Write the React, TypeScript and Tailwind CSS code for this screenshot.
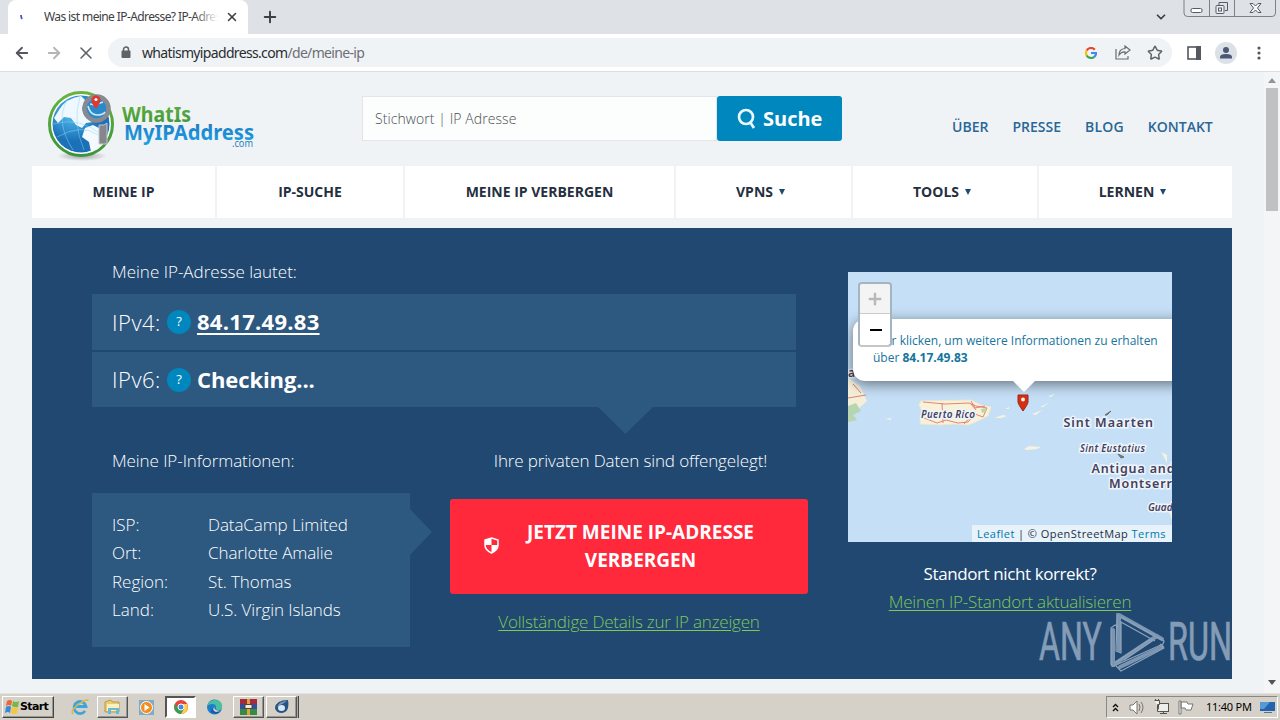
import type { ReactNode } from "react";
import {
  ArrowLeft,
  ArrowRight,
  ChevronDown,
  Plus,
  Star,
  X,
} from "lucide-react";

const navItems = [
  { label: "MEINE IP", width: "w-[183px]" },
  { label: "IP-SUCHE", width: "w-[186px]" },
  { label: "MEINE IP VERBERGEN", width: "w-[269px]" },
  { label: "VPNS", width: "w-[175px]", menu: true },
  { label: "TOOLS", width: "w-[184px]", menu: true },
  { label: "LERNEN", width: "w-[193px]", menu: true },
];

const details = [
  ["ISP:", "DataCamp Limited"],
  ["Ort:", "Charlotte Amalie"],
  ["Region:", "St. Thomas"],
  ["Land:", "U.S. Virgin Islands"],
];

function WindowButtons() {
  return (
    <svg className="absolute right-[3px] top-0" width="94" height="18" fill="none">
      <path d="M1 0V13Q1 16.500 4.500 16.500H89Q92.500 16.500 92.500 13V0M26.500 0V16M51.500 0V16" stroke="#7b808a" />
      <g stroke="#555b66">
        <rect x="8" y="8.500" width="11" height="4" rx="1.500" fill="#fff" />
        <path d="M36 5V2.500H44.500V10.500H42" />
        <rect x="33" y="5.500" width="8" height="8" rx="1" fill="#eef0f3" />
        <rect x="35.500" y="8" width="3" height="3" />
        <path d="M67 3.500h3l2.500 2.500L75 3.500h3L74.500 8l3.500 4.500h-3L72.500 10 70 12.500h-3L70.500 8z" fill="#f7f8fa" />
      </g>
    </svg>
  );
}

function TabStrip() {
  return (
    <div className="relative flex h-[34px] shrink-0 bg-[#dee1e6] pl-2">
      <div className="flex h-full w-60 items-center rounded-t-lg bg-white pl-[12px] pr-[9px]">
        <svg className="shrink-0" width="6" height="10" fill="none">
          <path d="M1 3Q1 5 2 7" stroke="#4459c9" strokeWidth="1.800" />
        </svg>
        <div className="relative ml-[18px] w-[174px] shrink-0 overflow-hidden whitespace-nowrap text-[12px] tracking-[-0.6px] text-[#3c4043]">
          Was ist meine IP-Adresse? IP-Adress
          <div className="absolute inset-y-0 right-0 w-6 bg-gradient-to-r from-transparent to-white" />
        </div>
        <X className="ml-[7px] size-[14px] shrink-0 text-[#3c4043]" strokeWidth={2.6} />
      </div>
      <Plus className="ml-[13px] mt-2 size-[18px] text-[#3c4043]" strokeWidth={2.6} />
      <ChevronDown className="absolute right-[112px] top-[10px] size-[14px] text-[#3c4043]" strokeWidth={3} />
      <WindowButtons />
    </div>
  );
}

function GoogleMark() {
  return (
    <svg width="12" height="12" viewBox="0 0 12 12" fill="none" strokeWidth="2.200">
      <path d="M9.800 2.700A5 5 0 0 0 1.700 3.500" stroke="#ea4335" />
      <path d="M1.700 3.500A5 5 0 0 0 1.700 8.500" stroke="#fbbc05" />
      <path d="M1.700 8.500A5 5 0 0 0 9.300 9.800" stroke="#34a853" />
      <path d="M6 6H11Q11 8.600 9.300 9.800" stroke="#4285f4" />
    </svg>
  );
}

function Toolbar() {
  return (
    <div className="flex h-[38px] shrink-0 items-center border-b border-[#dcdfe2] bg-white pl-[13px] pr-3">
      <ArrowLeft className="size-[18px] text-[#55585d]" strokeWidth={2.4} />
      <ArrowRight className="ml-[14px] size-[18px] text-[#b3b5b8]" strokeWidth={2.4} />
      <X className="ml-[13px] size-[20px] text-[#5f6368]" strokeWidth={1.9} />
      <div className="ml-[12px] flex h-[29px] w-[1064px] items-center rounded-full bg-[#f0f3f5] pl-[13px] pr-[9px]">
        <svg width="10" height="13" fill="none">
          <path d="M2.500 6V3.500a2.500 2.500 0 0 1 5 0V6" stroke="#5f6368" strokeWidth="1.500" />
          <rect x="0.500" y="4.500" width="9" height="7.500" rx="1" fill="#5f6368" />
        </svg>
        <span className="ml-[11px] text-[14px] tracking-[-0.66px] text-[#2a2c2f]">
          whatismyipaddress.com<span className="text-[#6b6f75]">/de/meine-ip</span>
        </span>
        <div className="ml-auto flex items-center">
          <GoogleMark />
          <svg className="ml-[18px]" width="17" height="15" fill="none" stroke="#686c72" strokeWidth="1.200">
            <path d="M1 4v10h12v-3" />
            <path d="M10 1l5 4-5 4V6.800Q6 6.500 4 10 4 4 10 3.500z" />
          </svg>
          <Star className="ml-[15px] size-[16px] text-[#5f6368]" strokeWidth={2.2} />
        </div>
      </div>
      <svg className="ml-[15px]" width="14" height="14">
        <rect x="1" y="1" width="12" height="12" fill="white" stroke="#55585e" strokeWidth="1.600" />
        <path d="M9 0h5v14H9z" fill="#55585e" />
      </svg>
      <svg className="ml-[14px]" width="22" height="22">
        <circle cx="11" cy="11" r="11" fill="#dce1e8" />
        <circle cx="11" cy="8" r="3" fill="#4b5876" />
        <path d="M5 16.500V15q0-3 6-3t6 3v1.500z" fill="#4b5876" />
      </svg>
      <svg className="ml-[20px]" width="4" height="14" fill="#55585e">
        <circle cx="2" cy="2" r="1.600" />
        <circle cx="2" cy="7" r="1.600" />
        <circle cx="2" cy="12" r="1.600" />
      </svg>
    </div>
  );
}

function Logo() {
  return (
    <svg width="214" height="76" viewBox="0 0 214 76">
      <defs>
        <radialGradient id="globe" cx="35%" cy="30%">
          <stop offset="0" stopColor="#55c4f4" />
          <stop offset="1" stopColor="#1c70b8" />
        </radialGradient>
        <radialGradient id="shade">
          <stop offset="0" stopColor="#8b8e91" stopOpacity="0.8" />
          <stop offset="1" stopColor="#8b8e91" stopOpacity="0" />
        </radialGradient>
        <linearGradient id="green" x1="0" y1="0" x2="0" y2="1">
          <stop offset="0" stopColor="#69b43f" />
          <stop offset="1" stopColor="#3a9439" />
        </linearGradient>
        <linearGradient id="blue" x1="0" y1="0" x2="0" y2="1">
          <stop offset="0" stopColor="#1c6fbc" />
          <stop offset="1" stopColor="#1da4e5" />
        </linearGradient>
      </defs>
      <ellipse cx="34" cy="66" rx="25" ry="5" fill="url(#shade)" />
      <circle cx="33" cy="34" r="31.500" fill="#fff" stroke="url(#green)" strokeWidth="3" />
      <circle cx="33" cy="34" r="28.500" fill="url(#globe)" />
      <path d="M11 20Q18 8 33 6l4 4-3 9 2 5 7 3 2 5-7 1-4 5-6-3-5-7-7-1-6 6-4-5z" fill="#eef8fe" />
      <path d="M37 38l8-3 8 4 6 1q0 11-9 19l-7 3-2-10-7-5z" fill="#f3f9fd" />
      <path d="M5 34q28-8 50 12M9 47q25-14 41-2M19 10Q7 32 25 60M32 7q-8 25 4 53" fill="none" stroke="#8cd4f5" strokeWidth="0.700" opacity="0.700" />
      <circle cx="48.500" cy="18.500" r="12" fill="#298acb" stroke="#888a90" strokeWidth="4.500" />
      <path d="M40 16q2 9 9 9 6 0 8-3M42 14l5 1 8-3" fill="none" stroke="#cbe9f8" strokeWidth="1.600" />
      <path d="M48 19q-5-6-4.500-9a4.500 4.500 0 0 1 9 0q0 3-4.500 9z" fill="#db3a34" />
      <circle cx="48" cy="9.500" r="1.500" fill="#fff" />
      <path d="M51 35q6 1 8-2v21h-8z" fill="#85878d" stroke="#c5c8cb" />
      <g fontFamily="Noto Sans, sans-serif" fontWeight="700">
        <text x="74" y="32" fontSize="21.500" fill="url(#green)" textLength="69" lengthAdjust="spacingAndGlyphs">WhatIs</text>
        <text x="76" y="49.500" fontSize="21.500" fill="url(#blue)" textLength="130" lengthAdjust="spacingAndGlyphs">MyIPAddress</text>
      </g>
      <text x="184" y="57" fontSize="10" fontFamily="Noto Sans, sans-serif" fill="#267fba" textLength="21" lengthAdjust="spacingAndGlyphs">.com</text>
    </svg>
  );
}

function SiteHeader() {
  return (
    <header className="flex h-[94px] shrink-0 pl-12">
      <div className="w-[314px] pt-[18px]">
        <Logo />
      </div>
      <div className="mt-6 flex h-[45px] w-[480px]">
        <div className="flex w-[355px] items-center border border-[#e3e6e8] bg-[#fcfdfd] pl-3 text-[14px] font-light tracking-[0.08px] text-[#4b4e51]">
          Stichwort | IP Adresse
        </div>
        <div className="flex w-[125px] items-center rounded-[3px] bg-[#0087be] pl-5 text-[20px] font-bold text-white">
          <svg width="20" height="22" fill="none" stroke="#e8f8ff" strokeWidth="2.700">
            <circle cx="9" cy="9" r="7" />
            <path d="M13 14l4 6" />
          </svg>
          <span className="ml-[6px]">Suche</span>
        </div>
      </div>
      <div className="ml-[110px] mt-[45px] flex gap-6 text-[14px] font-semibold leading-5 text-[#2a6697]">
        <span>ÜBER</span>
        <span>PRESSE</span>
        <span className="tracking-[0.2px]">BLOG</span>
        <span>KONTAKT</span>
      </div>
    </header>
  );
}

function MainNav() {
  return (
    <nav className="mx-8 flex h-[52px] shrink-0 gap-[2px]">
      {navItems.map((item) => (
        <div
          key={item.label}
          className={`${item.width} flex shrink-0 items-center justify-center bg-white pb-[2px] text-[14px] font-bold text-[#252f3f]`}
        >
          {item.label}
          {item.menu && (
            <svg className="ml-[6px] mr-[6px] mt-[1px]" width="6" height="6">
              <path d="M0 0h6L3 6z" fill="#1f4872" />
            </svg>
          )}
        </div>
      ))}
    </nav>
  );
}

function AddressRow({ label, children }: { label: string; children: ReactNode }) {
  return (
    <div className="flex items-center bg-[#2d587f] pl-5 text-[22px] text-white">
      <span className="w-[55px] font-light tracking-[0.5px]">{label}</span>
      <span className="flex size-6 items-center justify-center rounded-full bg-[#0087be] text-[13px] font-normal">
        ?
      </span>
      <span className="ml-[6px] font-bold">{children}</span>
    </div>
  );
}

function LocationMap() {
  return (
    <div className="relative h-[270px] w-[324px] overflow-hidden bg-[#c5dff6] text-left">
      <svg className="absolute inset-0" width="324" height="270">
        <path d="M0 106l12 8 7 15-10 9-9 6z" fill="#f5efda" />
        <path d="M0 134l8-3 5 8-8 4 4 5-9 2z" fill="#b7d5ae" />
        <path d="M0 126l18-3M5 112l8 9" fill="none" stroke="#dd8176" />
        <path d="M73 129l50-1 10 5 10 2-3 9-12 6-8 3-14-1-14 1-20-1 2-13-3-6z" fill="#f8f2d9" stroke="#eee8cd" />
        <path d="M75 130l22 2 24-1 7 3 11 2-4 9-8-3-7 8-10 1-12-3-9 3-13-5M94 131l1 20M123 129l4 7 10-2M123 132l5 6M116 152l10-11" fill="none" stroke="#e07870" strokeWidth="0.900" />
        <path d="M133 137l5-1 1 3-5 2z" fill="#bed69f" />
        <path d="M146 146l9-3 4 1-6 2zM157 137l4-2v2zM176 177l5-3 12 1-4 2-10 1zM184 142l10-4-6 5zM192 135l10-5-7 5zM200 124l7-2-4 3zM37 147l6-1v2z" fill="#f5f3df" />
        <path d="M313 180l6 3v8l-3-6zM324 230l-4 7 4 11z" fill="#f5f3df" />
        <path d="M257 143l6-4-4 4zM270 182l6 3-3 1z" fill="#7c8580" stroke="#647069" />
        <g fill="#45405b" stroke="#edf5fc" strokeWidth="3" paintOrder="stroke" fontFamily="Noto Sans, sans-serif" fontWeight="600">
          <text x="0" y="105" fontSize="12">a</text>
          <text x="73" y="146" fontSize="10" fontStyle="italic" textLength="54">Puerto Rico</text>
          <text x="215.500" y="154.500" fontSize="12.500" textLength="89.500">Sint Maarten</text>
          <text x="232" y="180" fontSize="10" fontStyle="italic" textLength="65">Sint Eustatius</text>
          <text x="243.500" y="201" fontSize="12.500" textLength="83">Antigua and</text>
          <text x="261" y="216" fontSize="12.500" letterSpacing="0.9">Montserr</text>
          <text x="300" y="239" fontSize="10" fontStyle="italic">Guad</text>
        </g>
      </svg>
      <div className="absolute left-[5px] top-[47px] h-[62px] w-[340px] rounded-xl bg-white pl-5 pt-[13px] text-[12px] leading-[17px] text-[#16749d] shadow-[0_3px_14px_rgba(0,0,0,0.5)]">
        <div className="whitespace-nowrap">Hier klicken, um weitere Informationen zu erhalten</div>
        <div>über <b>84.17.49.83</b></div>
      </div>
      <svg className="absolute left-[164px] top-[108px]" width="24" height="34">
        <path d="M0 0h24L12 12z" fill="#fff" />
        <path d="M6 15h10v7q0 2-5 9-5-7-5-9z" fill="#d42f16" stroke="#9d2718" />
        <circle cx="11" cy="19.500" r="2" fill="#fff5df" />
      </svg>
      <div className="absolute left-[10px] top-[10px] w-[34px] overflow-hidden rounded-[4px] border-2 border-[#a5b4c1] border-b-[#c3c5c8]">
        <div className="flex h-[30px] items-center justify-center border-b border-[#ccc] bg-[#f4f4f4]">
          <Plus className="size-[18px] text-[#b9b9b9]" strokeWidth={3.3} />
        </div>
        <div className="flex h-[31px] items-center justify-center bg-white">
          <span className="ml-[2px] h-[2px] w-3 bg-black" />
        </div>
      </div>
      <div className="absolute bottom-0 right-0 h-[17px] w-[200px] whitespace-nowrap bg-[#e7f2fb] pl-[5px] text-[11px] leading-[17px] tracking-[0.45px] text-[#222f3b]">
        <span className="text-[#0078a8]">Leaflet</span> | © OpenStreetMap <span className="text-[#0078a8]">Terms</span>
      </div>
    </div>
  );
}

function Watermark() {
  return (
    <svg className="absolute left-[1038px] top-[610px]" width="196" height="62" fill="none" opacity="0.600">
      <g stroke="#b9cadd" strokeWidth="4" strokeLinecap="round" strokeLinejoin="round">
        <path d="M75 20V55L119 26" />
        <path d="M81 40V5L124 29" />
        <path d="M82 57L124 37" />
      </g>
      <g stroke="#d4dfeb" strokeWidth="1.300" strokeLinejoin="round">
        <path d="M80 17L77 15L73 18V54Q74 58 78 55L125 34L126 31L83 7M79 3L78 41L83 43V12L117 31M77 53L111 30L114 31L86 50M78 56L83 61L126 38L122 34" />
      </g>
      <g fill="#c8d5e5" stroke="#c8d5e5" strokeWidth="0.700" fontFamily="Roboto, sans-serif" fontSize="53">
        <text transform="translate(1 50) scale(.66 1)" textLength="95" lengthAdjust="spacingAndGlyphs">ANY</text>
        <text transform="translate(130 50) scale(.66 1)" textLength="97" lengthAdjust="spacingAndGlyphs">RUN</text>
      </g>
    </svg>
  );
}

function IpPanel() {
  return (
    <section className="mx-8 mt-[10px] flex h-[451px] shrink-0 gap-10 bg-[#204871] pl-[60px] text-[17px] text-white">
      <div className="w-[716px] font-light">
        <div className="mt-[32px] h-[34px] pl-5 leading-6">Meine IP-Adresse lautet:</div>
        <div className="grid h-[113px] w-[704px] grid-rows-[56px_55px] gap-[2px]">
          <AddressRow label="IPv4:">
            <span className="relative -top-px tracking-[0.28px] underline decoration-2 underline-offset-[3px]">84.17.49.83</span>
          </AddressRow>
          <AddressRow label="IPv6:">
            <span className="tracking-[-0.1px]">Checking...</span>
          </AddressRow>
        </div>
        <svg className="ml-[506px]" width="55" height="27">
          <path d="M0 0h55L27.500 27z" fill="#2d587f" />
        </svg>
        <div className="flex">
          <div className="w-[358px] pt-[15px]">
            <div className="pl-5 leading-6 tracking-[-0.08px]">Meine IP-Informationen:</div>
            <div className="mt-5 flex items-start">
              <div className="flex h-[154px] w-[318px] flex-col bg-[#2d587f] pl-5 pt-[18px]">
                {details.map(([name, value]) => (
                  <div key={name} className="flex h-[28.4px] leading-7">
                    <span className="w-24">{name}</span>
                    <span className="tracking-[-0.1px]">{value}</span>
                  </div>
                ))}
              </div>
              <svg className="mt-[16px]" width="22" height="46">
                <path d="M0 0l22 23L0 46z" fill="#2d587f" />
              </svg>
            </div>
          </div>
          <div className="w-[358px] pt-[15px] text-center">
            <div className="pl-[3px] leading-6 tracking-[-0.12px]">Ihre privaten Daten sind offengelegt!</div>
            <div className="mt-[26px] flex h-[95px] items-center rounded-[3px] bg-[#ff293b] pb-[2px] pl-[34px] text-[19px] font-bold leading-7">
              <svg width="15" height="17" viewBox="0 0 15 17">
                <path d="M7.500 1L14 3v5q0 5-6.500 8Q1 13 1 8V3z" fill="#ff293b" stroke="#fff" strokeWidth="1.500" />
                <path d="M7.500 1L1 3v5h6.500zM7.500 8H14q0 5-6.500 8z" fill="#fff" />
              </svg>
              <div className="ml-[13px] w-[257px]">
                JETZT MEINE IP-ADRESSE
                <br />
                VERBERGEN
              </div>
            </div>
            <div className="mt-4 leading-6 tracking-[-0.2px] text-[#80c957] underline underline-offset-2">
              Vollständige Details zur IP anzeigen
            </div>
          </div>
        </div>
      </div>
      <div className="w-[324px] pt-11 text-center">
        <LocationMap />
        <div className="mt-[18px] leading-7">
          <span className="tracking-[-0.4px]">Standort nicht korrekt?</span>
          <br />
          <span className="font-light tracking-[-0.2px] text-[#80c957] underline underline-offset-2">Meinen IP-Standort aktualisieren</span>
        </div>
      </div>
    </section>
  );
}

function Scrollbar() {
  return (
    <div className="flex w-4 flex-col items-center bg-[#f3f5f7]">
      <svg className="my-[5px] shrink-0" width="8" height="6">
        <path d="M0 6l4-5 4 5z" fill="#929496" />
      </svg>
      <div className="h-[123px] w-3 shrink-0 bg-[#bfc1c3]" />
      <svg className="mb-[8px] mt-auto shrink-0" width="8" height="5">
        <path d="M0 0h8L4 5z" fill="#515356" />
      </svg>
    </div>
  );
}

function TaskButton({ active = false, children }: { active?: boolean; children: ReactNode }) {
  return (
    <div
      className={
        active
          ? "flex h-[22px] w-[31px] items-center justify-center border-2 border-b-white border-l-[#555] border-r-white border-t-[#555] bg-white"
          : "flex h-[22px] w-[31px] items-center justify-center border border-b-[#555] border-l-white border-r-[#555] border-t-white shadow-[inset_-1px_-1px_#999791]"
      }
    >
      {children}
    </div>
  );
}

function WindowsFlag() {
  return (
    <svg width="16" height="16" viewBox="0 0 16 16">
      <path d="M3 2q3-2 5 0L7 7Q5 5 2 7z" fill="#ed6435" />
      <path d="M9 2q3 2 6 0l-1 6q-3 1-6-1z" fill="#77b843" />
      <path d="M2 8q3-2 5 0l-1 6q-2-2-5 0z" fill="#358bd5" />
      <path d="M8 8q3 2 6 1l-1 5q-3 2-6 0z" fill="#f7c63b" />
    </svg>
  );
}

function Taskbar() {
  return (
    <div className="flex h-[27px] shrink-0 items-center border-t border-[#e4e2dc] bg-[#d5d0c8] font-['DejaVu_Sans']">
      <div className="ml-[2px] flex h-[22px] w-[52px] items-center border border-b-[#444] border-l-white border-r-[#444] border-t-white pl-[1px] text-[11px] font-bold tracking-[-0.65px] text-black shadow-[inset_-1px_-1px_#999791]">
        <WindowsFlag />
        <span>Start</span>
      </div>
      <svg className="ml-[17px]" width="18" height="18" fill="none">
        <path d="M14 13a6 6 0 1 1 1-4.500H5" stroke="#3da5dd" strokeWidth="2.800" />
        <path d="M2 16Q-1 12 8 6T17 3" stroke="#dcb743" strokeWidth="1.500" />
      </svg>
      <div className="ml-[8px]">
        <TaskButton>
          <svg width="17" height="16">
            <path d="M1 3l5-2 3 2h6v10H1z" fill="#edcb6a" stroke="#bb9a47" />
            <path d="M3 5h12v7H3z" fill="#faf0bf" />
            <path d="M4 9h11v6h-3v-4H7v4H4z" fill="#67b9d5" />
          </svg>
        </TaskButton>
      </div>
      <svg className="ml-[11px]" width="15" height="15">
        <rect width="15" height="15" fill="#80aac8" />
        <circle cx="7.500" cy="7.500" r="6" fill="#f58d1c" stroke="#fff" />
        <path d="M5.500 4v7l5-3.500z" fill="#fff" />
      </svg>
      <div className="ml-[11px]">
        <TaskButton active>
          <svg width="16" height="16" viewBox="0 0 16 16">
            <circle cx="8" cy="8" r="7" fill="#e8443a" />
            <path d="M2 5A7 7 0 0 0 8 15l4-6H6z" fill="#2ca452" />
            <path d="M8 15A7 7 0 0 0 14 5H8l3 5z" fill="#ffd248" />
            <circle cx="8" cy="8" r="3" fill="#4b83e6" stroke="#fff" />
          </svg>
        </TaskButton>
      </div>
      <svg className="ml-[10px]" width="17" height="16">
        <circle cx="8.500" cy="8" r="7.500" fill="#1b7ecb" />
        <path d="M1 7Q3 1 9 1q8 0 7 8-2 4-6 1 1-5-4-5-3 0-5 2z" fill="#4bc0a1" />
        <path d="M6 8Q6 14 15 12 10 17 5 13z" fill="#1758a4" />
        <path d="M9 7q-3 4 5 5l-4 1Q5 11 9 7z" fill="#d5d0c8" />
      </svg>
      <div className="ml-[10px]">
        <TaskButton>
          <svg width="17" height="16">
            <path d="M0 0h17v5H0z" fill="#a32b3b" />
            <path d="M0 5h17v5H0z" fill="#364d9c" />
            <path d="M0 10h17v6H0z" fill="#358b45" />
            <path d="M7 0h3v16H7z" fill="#dda33d" />
            <path d="M5 5.500h7v4H5z" fill="#f2eee2" stroke="#554132" />
          </svg>
        </TaskButton>
      </div>
      <div className="ml-[2px] flex">
        <TaskButton>
          <svg width="16" height="16">
            <path d="M1 9Q2 1 14 1q2 12-6 13-6 0-7-5z" fill="#28537f" />
            <path d="M3 8q2-6 10-6-4 3-7 4z" fill="#6f9bc0" />
            <ellipse cx="7.500" cy="9" rx="3.500" ry="3" fill="#d8e9f5" />
          </svg>
        </TaskButton>
        <span className="h-[22px] w-[2px] border-r border-[#444] bg-[#aaa]" />
      </div>
      <div className="ml-auto mr-[2px] flex h-[22px] w-[172px] items-center border border-b-white border-l-[#888] border-r-white border-t-[#888] pl-[5px]">
        <svg width="7" height="9" fill="none" stroke="#111" strokeWidth="1.400">
          <path d="M1 4l2.500-2.500L6 4M1 8l2.500-2.500L6 8" />
        </svg>
        <svg className="ml-[10px]" width="17" height="15" fill="none" stroke="#77746f">
          <path d="M1 5h3l4-4v13l-4-4H1z" fill="#fff" />
          <path d="M10 4q2 3 0 7M12 2q4 5 0 11" />
        </svg>
        <svg className="ml-[7px]" width="17" height="16" fill="#eee" stroke="#55534f">
          <rect x="5.500" y="4.500" width="10" height="8" />
          <path d="M1.500 1.500h5v4h-2v7h2M7 14.500h7M10.500 12.500v2M2.500 0v2M5.500 0v2" />
        </svg>
        <svg className="ml-[8px]" width="16" height="15" fill="#fff" stroke="#777">
          <path d="M1 1v13h2V1zM3 2h6l1 2h5l-2 6H8L7 8H3z" />
        </svg>
        <span className="ml-[12px] w-[46px] whitespace-nowrap font-['Noto_Sans'] text-[11px] tracking-[-0.25px] text-black">11:40 PM</span>
        <svg className="ml-[8px]" width="16" height="13">
          <path d="M0 1h15v9H0z" fill="#2464ae" />
          <path d="M0 1h10L4 8H0z" fill="#5798d5" />
          <path d="M4 11h8v1H4z" fill="#597184" />
        </svg>
      </div>
    </div>
  );
}

export default function App() {
  return (
    <div className="relative flex h-[720px] w-[1280px] flex-col overflow-hidden bg-[#f0f2f5] font-['Open_Sans',sans-serif]">
      <div className="contents font-['Noto_Sans',sans-serif]">
        <TabStrip />
        <Toolbar />
      </div>
      <main className="flex h-[621px] shrink-0">
        <div className="flex w-[1264px] flex-col bg-[#f0f3f5]">
          <SiteHeader />
          <MainNav />
          <IpPanel />
        </div>
        <Scrollbar />
      </main>
      <Taskbar />
      <Watermark />
    </div>
  );
}
